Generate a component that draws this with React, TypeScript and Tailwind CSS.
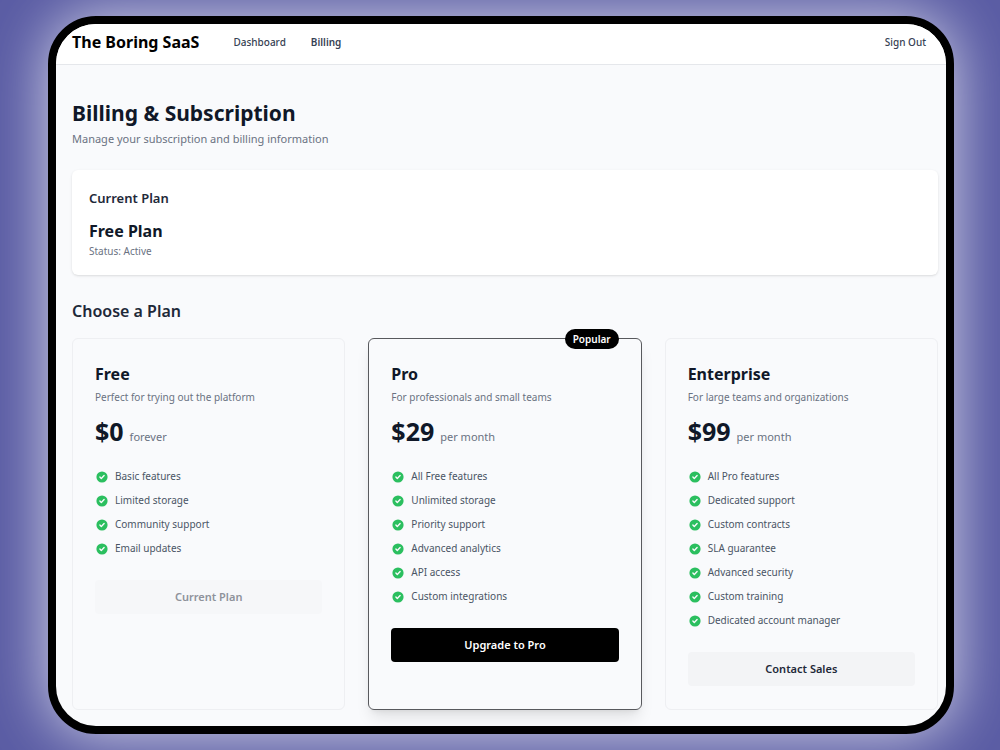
import clsx from "clsx";

type Plan = {
  name: string;
  description: string;
  price: string;
  period: string;
  features: string[];
  action: string;
  variant: "current" | "primary" | "secondary";
  popular?: boolean;
};

const plans: Plan[] = [
  {
    name: "Free",
    description: "Perfect for trying out the platform",
    price: "$0",
    period: "forever",
    features: [
      "Basic features",
      "Limited storage",
      "Community support",
      "Email updates",
    ],
    action: "Current Plan",
    variant: "current",
  },
  {
    name: "Pro",
    description: "For professionals and small teams",
    price: "$29",
    period: "per month",
    features: [
      "All Free features",
      "Unlimited storage",
      "Priority support",
      "Advanced analytics",
      "API access",
      "Custom integrations",
    ],
    action: "Upgrade to Pro",
    variant: "primary",
    popular: true,
  },
  {
    name: "Enterprise",
    description: "For large teams and organizations",
    price: "$99",
    period: "per month",
    features: [
      "All Pro features",
      "Dedicated support",
      "Custom contracts",
      "SLA guarantee",
      "Advanced security",
      "Custom training",
      "Dedicated account manager",
    ],
    action: "Contact Sales",
    variant: "secondary",
  },
];

const buttonStyles = {
  current: "bg-[#f6f7f9] text-[#8e929b]",
  primary: "bg-black text-white hover:bg-gray-800",
  secondary: "bg-gray-100 text-gray-800 hover:bg-gray-200",
};

const CheckIcon = () => (
  <svg
    className="size-3.5 shrink-0 text-[#2bbf5f]"
    viewBox="0 0 20 20"
    fill="currentColor"
    aria-hidden="true"
  >
    <path
      fillRule="evenodd"
      clipRule="evenodd"
      d="M10 18a8 8 0 100-16 8 8 0 000 16zm3.707-9.293a1 1 0 00-1.414-1.414L9 10.586 7.707 9.293a1 1 0 00-1.414 1.414l2 2a1 1 0 001.414 0l4-4z"
    />
  </svg>
);

const Navbar = () => (
  <nav className="flex h-[41px] items-center border-b border-gray-200 bg-white pb-1 pl-4 pr-5">
    <a href="#" className="text-[16px] font-bold text-black">
      The Boring SaaS
    </a>
    <div className="ml-[34px] flex items-center gap-[25px] text-[10px] text-gray-700">
      <a href="#dashboard" className="font-medium">
        Dashboard
      </a>
      <a href="#billing" className="font-semibold">
        Billing
      </a>
    </div>
    <button type="button" className="ml-auto text-[10px] font-medium text-gray-700">
      Sign Out
    </button>
  </nav>
);

const PlanCard = ({ plan }: { plan: Plan }) => (
  <div
    className={clsx(
      "relative rounded-md border px-[22px] py-[23px]",
      plan.popular ? "border-[#58595d] shadow-lg" : "border-[#eeeff2]"
    )}
  >
    {plan.popular && (
      <span className="absolute -top-2.5 right-[22px] rounded-full bg-black px-2 text-[10px] leading-5 font-semibold text-white">
        Popular
      </span>
    )}
    <h3 className="text-[16px] leading-6 font-bold text-gray-900">{plan.name}</h3>
    <p className="mt-[3px] text-[10px] leading-4 text-gray-500">{plan.description}</p>
    <p className="mt-2.5 flex items-baseline gap-1.5 leading-8">
      <span className="text-[25px] font-bold text-gray-900">{plan.price}</span>
      <span className="text-[11px] text-gray-500">{plan.period}</span>
    </p>
    <ul className="mt-[15px] space-y-2">
      {plan.features.map((feature) => (
        <li
          key={feature}
          className="flex items-end gap-1.5 text-[10px] leading-4 text-gray-600"
        >
          <CheckIcon />
          {feature}
        </li>
      ))}
    </ul>
    <button
      type="button"
      disabled={plan.variant === "current"}
      className={clsx(
        "mt-6 h-[34px] w-full rounded-sm text-[11px] font-semibold",
        buttonStyles[plan.variant]
      )}
    >
      {plan.action}
    </button>
  </div>
);

const App = () => {
  return (
    <div className="min-h-screen bg-[#5a5ca4] py-4 pl-12 pr-[46px] font-['Noto_Sans',sans-serif]">
      <div className="overflow-hidden rounded-[48px] border-8 border-black bg-[#f9fafc] shadow-[0_0_60px_rgba(255,255,255,0.75)]">
        <Navbar />
        <main className="pb-4 pl-4 pr-2 pt-8">
          {/* Page heading */}
          <h1 className="text-[21px] leading-8 font-bold text-gray-900">
            Billing &amp; Subscription
          </h1>
          <p className="mt-0.5 text-[11px] leading-4 text-gray-500">
            Manage your subscription and billing information
          </p>

          {/* Current subscription */}
          <section className="mt-[23px] rounded-md bg-white px-[17px] py-4 shadow-sm">
            <h2 className="text-[13px] leading-6 font-semibold text-gray-800">
              Current Plan
            </h2>
            <p className="mt-[9px] text-[16px] leading-6 font-bold text-gray-900">
              Free Plan
            </p>
            <p className="text-[10px] leading-4 text-gray-500">Status: Active</p>
          </section>

          {/* Plans */}
          <h2 className="mt-6 text-[16px] leading-6 font-semibold text-gray-800">
            Choose a Plan
          </h2>
          <div className="mt-[15px] grid grid-cols-3 gap-[23px]">
            {plans.map((plan) => (
              <PlanCard key={plan.name} plan={plan} />
            ))}
          </div>
        </main>
      </div>
    </div>
  );
};

export default App;
